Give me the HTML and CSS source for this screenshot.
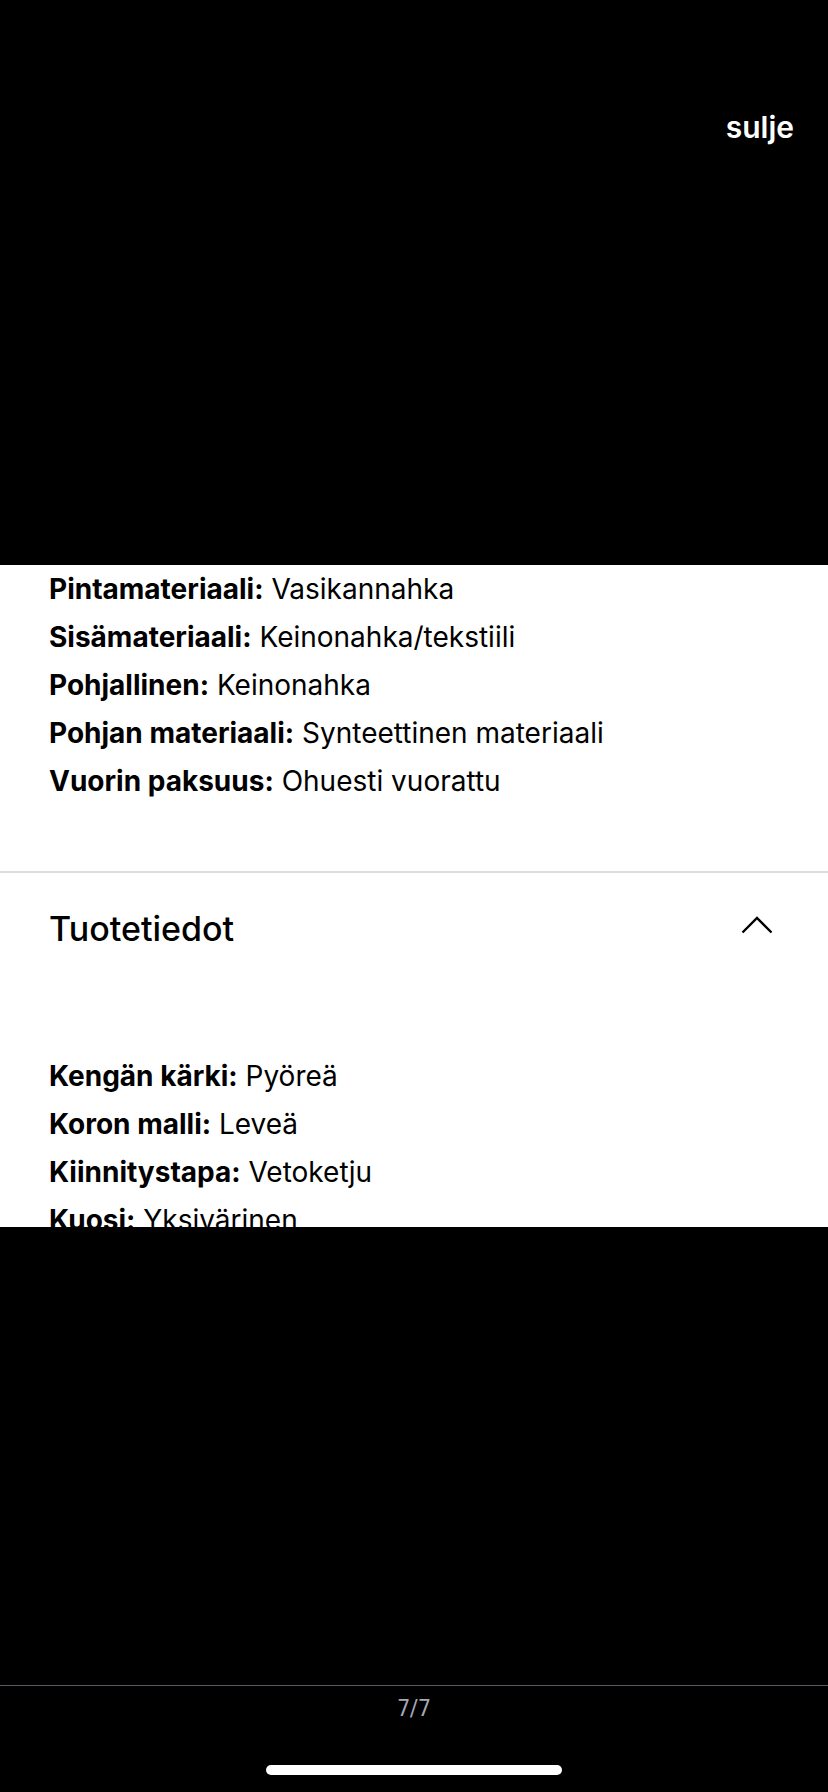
FILE: index.html
```html
<!DOCTYPE html>
<html lang="fi">
<head>
    <meta charset="UTF-8">
    <meta name="viewport" content="width=device-width, initial-scale=1.0">
    <title>Tuotetiedot</title>
    <link rel="stylesheet" href="styles.css">
</head>
<body>
    <div class="viewer">
        <div class="top-bar">
            <button class="close-btn">sulje</button>
        </div>

        <div class="panel">
            <ul class="spec-list">
                <li><b>Pintamateriaali:</b> Vasikannahka</li>
                <li><b>Sisämateriaali:</b> Keinonahka/tekstiili</li>
                <li><b>Pohjallinen:</b> Keinonahka</li>
                <li><b>Pohjan materiaali:</b> Synteettinen materiaali</li>
                <li><b>Vuorin paksuus:</b> Ohuesti vuorattu</li>
            </ul>

            <div class="section">
                <div class="section-header">
                    <h2>Tuotetiedot</h2>
                    <svg class="chevron" width="32" height="18" viewBox="0 0 32 18">
                        <polyline points="1.5,16.5 16,2 30.5,16.5" fill="none" stroke="#000" stroke-width="2.4"/>
                    </svg>
                </div>
                <ul class="spec-list">
                    <li><b>Kengän kärki:</b> Pyöreä</li>
                    <li><b>Koron malli:</b> Leveä</li>
                    <li><b>Kiinnitystapa:</b> Vetoketju</li>
                    <li><b>Kuosi:</b> Yksivärinen</li>
                    <li><b>Tuotenumero:</b> 000</li>
                </ul>
            </div>
        </div>

        <div class="footer">
            <div class="counter">7/7</div>
            <div class="home-bar"></div>
        </div>
    </div>
</body>
</html>
```

FILE: styles.css
```css
body {
    margin: 0;
    background-color: #000;
    font-family: Inter, "Noto Sans", sans-serif;
    color: #000;
}
.viewer {
    width: 828px;
    height: 1792px;
    display: flex;
    flex-direction: column;
    background-color: #000;
}
.top-bar {
    height: 565px;
    display: flex;
    justify-content: flex-end;
    align-items: flex-start;
}
.close-btn {
    margin-top: 109px;
    margin-right: 34px;
    padding: 0;
    border: none;
    background: none;
    color: #fff;
    font-family: Inter, sans-serif;
    font-size: 30px;
    font-weight: 600;
    cursor: pointer;
}
.panel {
    height: 662px;
    overflow: hidden;
    background-color: #fff;
}
.spec-list {
    list-style: none;
    margin: 0;
    padding: 0 49px;
    font-size: 28px;
    line-height: 48px;
}
.spec-list b {
    font-weight: 700;
}
.panel > .spec-list {
    padding-bottom: 66px;
}
.section {
    border-top: 2px solid #dcdcdc;
}
.section-header {
    display: flex;
    justify-content: space-between;
    align-items: center;
    padding: 25px 55px 0 49px;
    height: 60px;
}
.section-header h2 {
    margin: 0;
    font-size: 34px;
    font-weight: 500;
}
.chevron {
    display: block;
    margin-bottom: 6px;
}
.section .spec-list {
    padding-top: 94px;
}
.footer {
    flex: 1;
    display: flex;
    flex-direction: column;
    align-items: center;
}
.counter {
    width: 100%;
    margin-top: 458px;
    border-top: 1px solid #5a5a66;
    padding-top: 8px;
    text-align: center;
    color: #a6aab6;
    font-family: "Liberation Sans Narrow", "Roboto Condensed", Roboto, sans-serif;
    font-size: 24px;
    line-height: 28px;
}
.home-bar {
    margin-top: 43px;
    width: 296px;
    height: 10px;
    border-radius: 5px;
    background-color: #fff;
}
```
